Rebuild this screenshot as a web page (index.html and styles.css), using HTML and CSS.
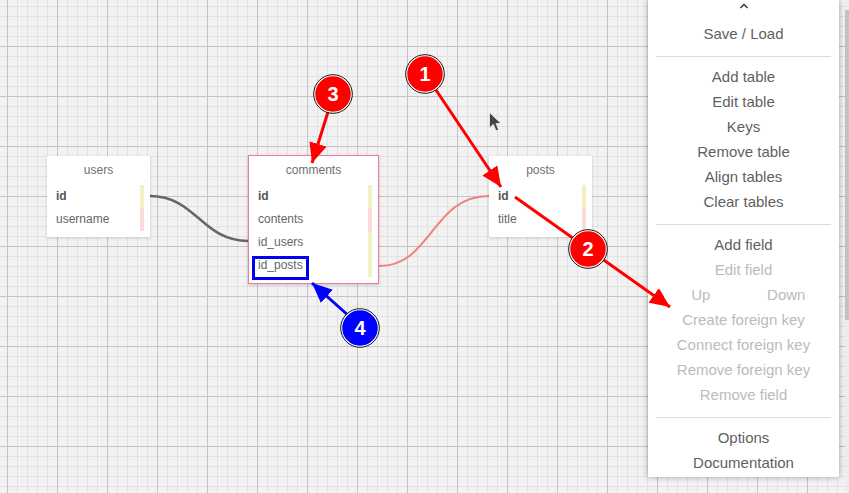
FILE: index.html
```html
<!DOCTYPE html>
<html>
<head>
<meta charset="utf-8">
<link rel="stylesheet" href="styles.css">
</head>
<body>
<div class="app">
  <div class="canvas"></div>

  <svg class="links" width="849" height="493" viewBox="0 0 849 493">
    <path d="M150 196 C 196 196, 202 241, 248 241" fill="none" stroke="#666" stroke-width="2.5"/>
    <path d="M489 196 C 432 196, 432 266, 379 266" fill="none" stroke="#f08080" stroke-width="2"/>
  </svg>

  <div class="table t-users">
    <div class="t-title">users</div>
    <div class="t-row key"><span>id</span><i class="bar yellow"></i></div>
    <div class="t-row"><span>username</span><i class="bar pink"></i></div>
  </div>

  <div class="table t-comments selected">
    <div class="t-title">comments</div>
    <div class="t-row key"><span>id</span><i class="bar yellow"></i></div>
    <div class="t-row"><span>contents</span><i class="bar pink"></i></div>
    <div class="t-row"><span>id_users</span><i class="bar yellow"></i></div>
    <div class="t-row"><span>id_posts</span><i class="bar yellow"></i></div>
  </div>

  <div class="table t-posts">
    <div class="t-title">posts</div>
    <div class="t-row key"><span>id</span><i class="bar yellow"></i></div>
    <div class="t-row"><span>title</span><i class="bar pink"></i></div>
  </div>

  <div class="menu">
    <div class="m-top">
      <svg width="10" height="8" viewBox="0 0 10 8"><path d="M1.5 6 L5 2.5 L8.5 6" fill="none" stroke="#444" stroke-width="1.6"/></svg>
    </div>
    <div class="m-item">Save / Load</div>
    <div class="m-sep"></div>
    <div class="m-item">Add table</div>
    <div class="m-item">Edit table</div>
    <div class="m-item">Keys</div>
    <div class="m-item">Remove table</div>
    <div class="m-item">Align tables</div>
    <div class="m-item">Clear tables</div>
    <div class="m-sep"></div>
    <div class="m-item">Add field</div>
    <div class="m-item off">Edit field</div>
    <div class="m-pair off"><span>Up</span><span>Down</span></div>
    <div class="m-item off">Create foreign key</div>
    <div class="m-item off">Connect foreign key</div>
    <div class="m-item off">Remove foreign key</div>
    <div class="m-item off">Remove field</div>
    <div class="m-sep"></div>
    <div class="m-item">Options</div>
    <div class="m-item">Documentation</div>
  </div>

  <div class="scrollbar"><div class="thumb"></div></div>

  <svg class="annot" width="849" height="493" viewBox="0 0 849 493">
    <defs>
      <marker id="ar" markerUnits="userSpaceOnUse" markerWidth="22" markerHeight="18" refX="20" refY="9" orient="auto">
        <path d="M0 0 L20 9 L0 18 z" fill="#ff0000"/>
      </marker>
      <marker id="ab" markerUnits="userSpaceOnUse" markerWidth="22" markerHeight="18" refX="20" refY="9" orient="auto">
        <path d="M0 0 L20 9 L0 18 z" fill="#0000ff"/>
      </marker>
    </defs>
    <rect x="253.5" y="257.5" width="54" height="21" fill="none" stroke="#0000ee" stroke-width="3"/>

    <line x1="436" y1="90" x2="501" y2="187" stroke="#ff0000" stroke-width="3" marker-end="url(#ar)"/>
    <line x1="328" y1="112" x2="312" y2="163" stroke="#ff0000" stroke-width="3" marker-end="url(#ar)"/>
    <line x1="515" y1="197" x2="670" y2="307" stroke="#ff0000" stroke-width="3" marker-end="url(#ar)"/>
    <line x1="350" y1="317" x2="312" y2="283" stroke="#0000ff" stroke-width="3" marker-end="url(#ab)"/>

    <g class="badge">
      <circle cx="425" cy="74" r="18.5" fill="#ff0000" stroke="#fff" stroke-width="1.5"/>
      <circle cx="425" cy="74" r="19.3" fill="none" stroke="#111" stroke-width="1"/>
      <text x="425" y="81">1</text>
    </g>
    <g class="badge">
      <circle cx="333" cy="94" r="18.5" fill="#ff0000" stroke="#fff" stroke-width="1.5"/>
      <circle cx="333" cy="94" r="19.3" fill="none" stroke="#111" stroke-width="1"/>
      <text x="333" y="101">3</text>
    </g>
    <g class="badge">
      <circle cx="588" cy="249" r="18.5" fill="#ff0000" stroke="#fff" stroke-width="1.5"/>
      <circle cx="588" cy="249" r="19.3" fill="none" stroke="#111" stroke-width="1"/>
      <text x="588" y="256">2</text>
    </g>
    <g class="badge">
      <circle cx="360" cy="328" r="18.5" fill="#0000ff" stroke="#fff" stroke-width="1.5"/>
      <circle cx="360" cy="328" r="19.3" fill="none" stroke="#111" stroke-width="1"/>
      <text x="360" y="335">4</text>
    </g>

    <path d="M489.5 112.5 L489.5 128 L493.3 124.3 L496 130.8 L498.6 129.7 L496 123.5 L501 123.5 Z" fill="#444" stroke="#eee" stroke-width="0.8"/>
  </svg>
</div>
</body>
</html>
```
FILE: styles.css
```css
* { box-sizing: border-box; }
html, body { margin: 0; padding: 0; }
body {
  font-family: "Liberation Sans", Arial, sans-serif;
  overflow: hidden;
}
.app {
  position: relative;
  width: 849px;
  height: 493px;
  overflow: hidden;
}
.canvas {
  position: absolute;
  inset: 0;
  background-color: #f2f2f2;
  background-image:
    linear-gradient(to right, #c4c4c4 1px, transparent 1px),
    linear-gradient(to bottom, #c4c4c4 1px, transparent 1px),
    linear-gradient(to right, #e2e2e2 1px, transparent 1px),
    linear-gradient(to bottom, #e2e2e2 1px, transparent 1px);
  background-size: 50px 50px, 50px 50px, 10px 10px, 10px 10px;
  background-position: 7px 0, 0 46px, 7px 0, 0 6px;
}
.links, .annot {
  position: absolute;
  left: 0;
  top: 0;
}
.badge text {
  font-family: "Liberation Sans", Arial, sans-serif;
  font-weight: bold;
  font-size: 20px;
  fill: #fff;
  text-anchor: middle;
}

.table {
  position: absolute;
  background: #fff;
  box-shadow: 0 1px 3px rgba(0,0,0,0.18);
  padding-bottom: 6px;
  font-size: 12px;
  color: #666;
}
.t-users { left: 47px; top: 156px; width: 103px; }
.t-posts { left: 489px; top: 156px; width: 103px; }
.t-comments {
  left: 248px; top: 155px; width: 131px;
  border: 1px solid #f07aa6;
}
.t-title {
  height: 29px;
  line-height: 29px;
  text-align: center;
  color: #707070;
}
.t-row {
  position: relative;
  height: 23px;
  line-height: 23px;
  padding-left: 9px;
}
.t-row.key { font-weight: bold; color: #555; }
.bar {
  position: absolute;
  right: 6px;
  top: 0;
  width: 4px;
  height: 23px;
}
.bar.yellow { background: #f3f1c4; }
.bar.pink { background: #fcdada; }

.menu {
  position: absolute;
  left: 648px;
  top: 0;
  width: 191px;
  background: #fff;
  box-shadow: 0 0 6px rgba(0,0,0,0.35);
  padding-bottom: 2px;
  font-size: 15px;
  color: #5f5f5f;
}
.m-top {
  height: 21px;
  display: flex;
  justify-content: center;
  align-items: flex-start;
  padding-top: 2px;
}
.m-item {
  height: 25px;
  line-height: 25px;
  text-align: center;
  white-space: nowrap;
}
.m-pair {
  height: 25px;
  line-height: 25px;
  display: grid;
  grid-template-columns: 1fr 1fr;
  padding: 0 10px;
  text-align: center;
}
.off { color: #bbbbbb; }
.m-sep {
  height: 1px;
  background: #dcdcdc;
  margin: 10px 8px 7px;
}
.scrollbar {
  position: absolute;
  left: 845px;
  top: 0;
  width: 4px;
  height: 493px;
  background: #ececec;
}
.thumb {
  margin-top: 10px;
  height: 310px;
  background: #c1c1c1;
}
```
